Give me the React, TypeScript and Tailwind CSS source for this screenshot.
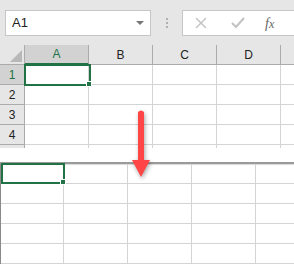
import React from 'react';

const cols = ['A', 'B', 'C', 'D', 'E'];
const rows = [1, 2, 3, 4, 5];

const App: React.FC = () => {
    return (
        <div className="relative w-[294px] h-[265px] overflow-hidden bg-white font-['Liberation_Sans',Arial,sans-serif]">
            {/* formula bar */}
            <div className="flex items-center h-[45px] bg-[#e6e6e6] pt-[1px]">
                <div className="flex items-center ml-[5px] w-[146px] h-[26px] bg-white border border-[#c6c6c6] pl-[6px] pr-[6px]">
                    <span className="text-[13px] text-[#222]">A1</span>
                    <span className="ml-auto w-0 h-0 border-l-[4px] border-r-[4px] border-t-[4px] border-l-transparent border-r-transparent border-t-[#777]" />
                </div>
                <div className="flex flex-col items-center justify-center gap-[2px] w-[31px]">
                    <span className="w-[2px] h-[2px] bg-[#b0b0b0]" />
                    <span className="w-[2px] h-[2px] bg-[#b0b0b0]" />
                    <span className="w-[2px] h-[2px] bg-[#b0b0b0]" />
                </div>
                <div className="flex items-center flex-1 h-[26px] bg-white border border-[#c6c6c6] border-r-0">
                    <svg width="12" height="12" viewBox="0 0 12 12" className="ml-[12px]">
                        <path d="M1 1 L11 11 M11 1 L1 11" stroke="#c4c4c4" strokeWidth="1.5" fill="none" />
                    </svg>
                    <svg width="14" height="12" viewBox="0 0 14 12" className="ml-[24px]">
                        <path d="M1 6 L5 10 L13 1" stroke="#c4c4c4" strokeWidth="2.2" fill="none" />
                    </svg>
                    <span className="ml-[20px] text-[14px] italic text-[#666] font-['Liberation_Serif',serif]">f<span className="text-[12px]">x</span></span>
                </div>
            </div>

            {/* upper pane */}
            <div className="h-[103px] overflow-hidden">
                <div className="flex h-[20px]">
                    <div className="relative w-[25px] shrink-0 bg-[#e6e6e6] border-r border-b border-[#ababab]">
                        <svg width="12" height="12" viewBox="0 0 12 12" className="absolute right-[2px] bottom-[2px]">
                            <path d="M12 0 L12 12 L0 12 Z" fill="#b8b8b8" />
                        </svg>
                    </div>
                    {cols.map(c => (
                        <div key={c} className={`w-[64px] shrink-0 flex items-center justify-center text-[12px] border-r border-b border-[#ababab] ${c === 'A' ? 'bg-[#d2d2d2] text-[#217346] border-b-[#217346] border-b-2' : 'bg-[#e6e6e6] text-[#222]'}`}>
                            {c === 'E' ? '' : c}
                        </div>
                    ))}
                </div>
                {rows.map(r => (
                    <div key={r} className="flex h-[20px]">
                        <div className={`w-[25px] shrink-0 flex items-center justify-center text-[12px] border-r border-b border-[#ababab] ${r === 1 ? 'bg-[#d2d2d2] text-[#217346]' : 'bg-[#e6e6e6] text-[#222]'}`}>
                            {r === 5 ? '' : r}
                        </div>
                        {cols.map(c => (
                            <div key={c} className="w-[64px] shrink-0 border-r border-b border-[#d4d4d4]" />
                        ))}
                    </div>
                ))}
            </div>

            <div className="h-[14px] bg-white" />
            <div className="h-[2px] bg-[#9a9a9a] shadow-[0_1px_1px_rgba(0,0,0,0.15)]" />

            {/* lower pane */}
            <div className="border-l border-[#8a8a8a]">
                {[1, 2, 3, 4, 5].map(r => (
                    <div key={r} className="flex h-[20px]">
                        {cols.map(c => (
                            <div key={c} className={`${c === 'A' ? 'w-[63px]' : 'w-[64px]'} shrink-0 border-r border-b border-[#d4d4d4]`} />
                        ))}
                    </div>
                ))}
            </div>

            {/* selection overlays */}
            <div className="absolute left-[24px] top-[64px] w-[67px] h-[22px] border-2 border-[#217346]" />
            <div className="absolute left-[86px] top-[81px] w-[6px] h-[6px] bg-[#217346] border border-white" />
            <div className="absolute left-[1px] top-[163px] w-[64px] h-[21px] border-2 border-[#217346]" />
            <div className="absolute left-[60px] top-[179px] w-[6px] h-[6px] bg-[#217346] border border-white" />

            {/* arrow */}
            <svg width="26" height="76" viewBox="0 0 26 76" className="absolute left-[128px] top-[106px] drop-shadow-[1px_2px_2px_rgba(0,0,0,0.35)]">
                <path d="M10 6 Q13 3 16 6 L16 54 L22 54 L13 71 L4 54 L10 54 Z" fill="#ff4545" />
            </svg>
        </div>
    );
};

export default App;
